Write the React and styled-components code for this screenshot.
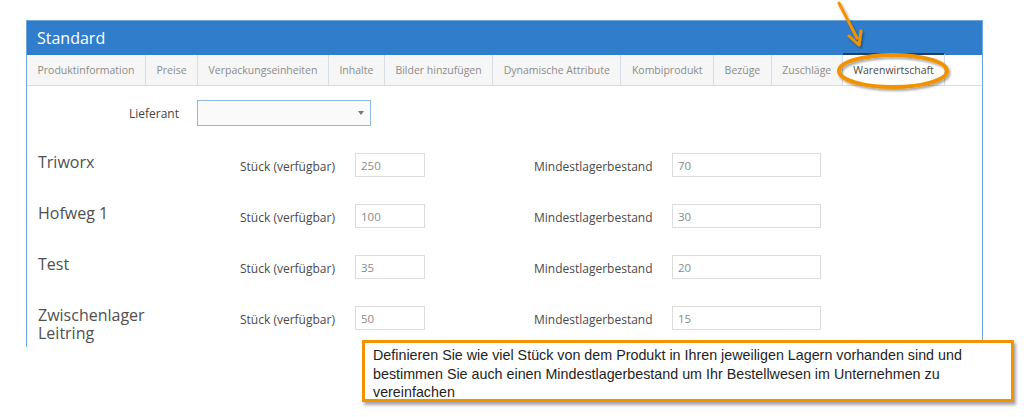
import React from 'react'
import styled, { createGlobalStyle } from 'styled-components'

const Global = createGlobalStyle`
  html, body {
    margin: 0;
    background: #fff;
    font-family: "Open Sans", "Noto Sans", sans-serif;
  }
`

const Page = styled.div`
  position: relative;
  width: 1024px;
  height: 417px;
  padding: 20px 0 0 26px;
  box-sizing: border-box;
  overflow: hidden;
`

const Panel = styled.div`
  width: 957px;
  height: 327px;
  box-sizing: border-box;
  border: 1px solid #6fa6dc;
  border-bottom: none;
  display: flex;
  flex-direction: column;
  overflow: hidden;
`

const Header = styled.div`
  flex-shrink: 0;
  height: 35px;
  background: #307ecb;
  color: #fff;
  font-size: 16px;
  display: flex;
  align-items: center;
  padding-left: 11px;
  margin: -1px -1px 0;
`

const TabBar = styled.div`
  flex-shrink: 0;
  height: 31px;
  display: flex;
  background: #fff;
  border-bottom: 1px solid #d5dee8;
  box-sizing: border-box;
`

const Tab = styled.div`
  height: ${p => (p.$active ? '32px' : '30px')};
  box-sizing: border-box;
  padding: 0 10.5px;
  display: flex;
  align-items: center;
  font-size: 10.5px;
  color: ${p => (p.$active ? '#4a4a4a' : '#8c8c8c')};
  background: ${p => (p.$active ? '#fff' : '#f6f6f6')};
  border-right: 1px solid #d5dee8;
  border-top: ${p => (p.$active ? '2px solid #1f3f60' : 'none')};
  margin-top: ${p => (p.$active ? '-2px' : '0')};
  white-space: nowrap;
`

const Content = styled.div`
  flex-shrink: 0;
  padding: 14px 0 0 11px;
  display: flex;
  flex-direction: column;
`

const SupplierRow = styled.div`
  display: flex;
  align-items: center;
  gap: 18px;
  margin-bottom: 27px;
`

const SupplierLabel = styled.div`
  width: 141px;
  text-align: right;
  font-size: 12px;
  color: #444;
`

const Select = styled.div`
  width: 174px;
  height: 26px;
  box-sizing: border-box;
  border: 1px solid #8fbbe3;
  background: #fafafa;
  display: flex;
  align-items: center;
  justify-content: flex-end;
  padding-right: 6px;
`

const Caret = styled.span`
  width: 0;
  height: 0;
  border-left: 3.5px solid transparent;
  border-right: 3.5px solid transparent;
  border-top: 4px solid #777;
`

const StockRow = styled.div`
  display: flex;
  align-items: flex-start;
  height: 51px;
  flex-shrink: 0;
`

const Store = styled.div`
  width: 202px;
  font-size: 16px;
  line-height: 18px;
  color: #505050;
  padding-top: 0;
`

const FieldLabel = styled.div`
  width: ${p => p.$w}px;
  margin-left: ${p => p.$ml || 0}px;
  height: 24px;
  display: flex;
  align-items: center;
  padding-top: 2px;
  box-sizing: border-box;
  font-size: 12px;
  color: #4a4a4a;
  white-space: nowrap;
`

const Input = styled.div`
  width: ${p => p.$w}px;
  height: 24px;
  box-sizing: border-box;
  border: 1px solid #dcdcdc;
  display: flex;
  align-items: center;
  padding-left: 5px;
  font-size: 11.5px;
  color: #8a8a8a;
  background: #fff;
`

const Callout = styled.div`
  position: absolute;
  left: 362px;
  top: 340px;
  width: 652px;
  height: 62px;
  box-sizing: border-box;
  border: 3px solid #f39200;
  background: #fff;
  box-shadow: 2px 3px 3px rgba(0, 0, 0, 0.35);
  padding: 3px 8px;
  font-family: "Liberation Sans", Arial, sans-serif;
  font-size: 14.3px;
  line-height: 18.5px;
  color: #1e1e1e;
  white-space: nowrap;
`

const Marker = styled.svg`
  position: absolute;
  left: 0;
  top: 0;
  pointer-events: none;
`

const tabs = [
  'Produktinformation', 'Preise', 'Verpackungseinheiten', 'Inhalte',
  'Bilder hinzufügen', 'Dynamische Attribute', 'Kombiprodukt', 'Bezüge',
  'Zuschläge', 'Warenwirtschaft',
]

const stores = [
  { name: 'Triworx', stock: 250, min: 70 },
  { name: 'Hofweg 1', stock: 100, min: 30 },
  { name: 'Test', stock: 35, min: 20 },
  { name: <>Zwischenlager<br />Leitring</>, stock: 50, min: 15 },
]

const App = () => {
  return (
    <Page>
      <Global />
      <Panel>
        <Header>Standard</Header>
        <TabBar>
          {tabs.map(t => (
            <Tab key={t} $active={t === 'Warenwirtschaft'}>{t}</Tab>
          ))}
        </TabBar>
        <Content>
          <SupplierRow>
            <SupplierLabel>Lieferant</SupplierLabel>
            <Select><Caret /></Select>
          </SupplierRow>
          {stores.map((s, i) => (
            <StockRow key={i}>
              <Store>{s.name}</Store>
              <FieldLabel $w={115}>Stück (verfügbar)</FieldLabel>
              <Input $w={70}>{s.stock}</Input>
              <FieldLabel $w={138} $ml={109}>Mindestlagerbestand</FieldLabel>
              <Input $w={149}>{s.min}</Input>
            </StockRow>
          ))}
        </Content>
      </Panel>

      <Marker width="1024" height="417" viewBox="0 0 1024 417">
        <defs>
          <filter id="sh" x="-20%" y="-20%" width="140%" height="140%">
            <feDropShadow dx="1.5" dy="2" stdDeviation="1.2" floodColor="#000" floodOpacity="0.35" />
          </filter>
        </defs>
        <g filter="url(#sh)" stroke="#f39200" fill="none" strokeLinecap="round">
          <path d="M839 3 L857 38" strokeWidth="3" />
          <path d="M849 36 L859 45 L861 31" strokeWidth="3" strokeLinejoin="round" />
          <ellipse cx="893" cy="71" rx="54" ry="16" strokeWidth="4" />
        </g>
      </Marker>

      <Callout>
        Definieren Sie wie viel Stück von dem Produkt in Ihren jeweiligen Lagern vorhanden sind und<br />
        bestimmen Sie auch einen Mindestlagerbestand um Ihr Bestellwesen im Unternehmen zu<br />
        vereinfachen
      </Callout>
    </Page>
  )
}

export default App
